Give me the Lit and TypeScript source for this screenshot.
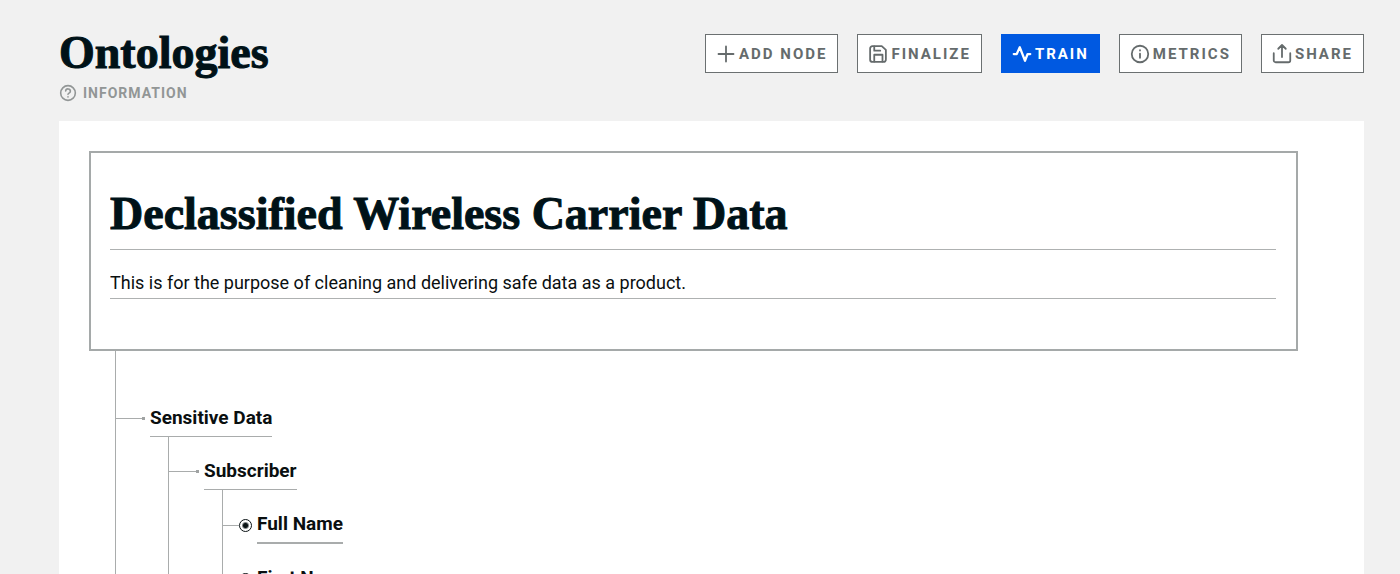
import { LitElement, html, css, svg, nothing, TemplateResult } from "lit";
import { customElement, property } from "lit/decorators.js";

type IconName = "plus" | "save" | "activity" | "info" | "share" | "help";

const ICONS: Record<IconName, TemplateResult> = {
  plus: svg`<path d="M12 2v20M2 12h20" />`,
  save: svg`<path d="M19 22.500H4.500a3 3 0 0 1-3-3v-15a3 3 0 0 1 3-3H17l5.500 5v12.500a3 3 0 0 1-3.500 3.500z" /><path d="M18 22v-9H7v9M7 2v5.500h8" />`,
  activity: svg`<path stroke-width="3" d="M23 12h-3.500l-3.500 9L9 3l-4 9H1" />`,
  info: svg`<circle cx="12" cy="12" r="11" /><path d="M12 17v-5.500M12 7v.3" />`,
  share: svg`<path d="M1 11v9.500A2.500 2.500 0 0 0 3.500 23h17a2.500 2.500 0 0 0 2.500-2.500V11M17 5l-5-5-5 5M12 0v16" />`,
  help: svg`<circle cx="12" cy="12" r="11" /><path d="M8.500 9a3.500 3.500 0 0 1 7 .8c0 2.200-3.500 2.600-3.500 4.200M12 17.800v.3" />`,
};

interface TreeNode {
  name: string;
  children?: TreeNode[];
}

const TREE: TreeNode[] = [
  {
    name: "Sensitive Data",
    children: [
      {
        name: "Subscriber",
        children: [{ name: "Full Name" }, { name: "First Name" }],
      },
    ],
  },
];

const ACTIONS: { icon: IconName; label: string; primary?: boolean }[] = [
  { icon: "plus", label: "ADD NODE" },
  { icon: "save", label: "FINALIZE" },
  { icon: "activity", label: "TRAIN", primary: true },
  { icon: "info", label: "METRICS" },
  { icon: "share", label: "SHARE" },
];

@customElement("ui-icon")
export class UiIcon extends LitElement {
  @property() name: IconName = "plus";

  static styles = css`
    :host {
      display: block;
      flex: none;
      width: 18px;
      height: 18px;
    }
    .glyph {
      display: block;
      width: 100%;
      height: 100%;
      fill: none;
      stroke: currentColor;
      stroke-width: 2.4;
      stroke-linecap: round;
      stroke-linejoin: round;
      overflow: visible;
    }
  `;

  render() {
    return html`<svg class="glyph" viewBox="0 0 24 24" aria-hidden="true">${ICONS[this.name]}</svg>`;
  }
}

@customElement("ontology-tree")
export class OntologyTree extends LitElement {
  @property({ attribute: false }) nodes: TreeNode[] = [];

  static styles = css`
    :host {
      display: block;
    }
    .list {
      list-style: none;
      margin: 0 0 0 18px;
      padding: 0;
      border-left: 1px solid #a9acac;
    }
    .root {
      margin-left: 26px;
      padding-top: 33px;
    }
    .row {
      display: flex;
      align-items: stretch;
      padding-top: 16px;
    }
    .branch {
      display: flex;
      align-items: center;
      width: 30px;
      margin-right: 5px;
    }
    .line {
      flex: 1;
      height: 1px;
      background: #a9acac;
    }
    .end {
      width: 3px;
      height: 3px;
      background: #a0a3a3;
    }
    .root > .item > .row > .branch {
      width: 29px;
    }
    .leaf .branch {
      width: 16px;
      margin-right: 0;
    }
    .name {
      line-height: 36px;
      border-bottom: 1px solid #a9acac;
      white-space: nowrap;
    }
    .leaf .name {
      border-bottom-width: 2px;
    }
    .body {
      padding-left: 35px;
    }
    .root > .item > .body {
      padding-left: 34px;
    }
    .mark {
      appearance: none;
      box-sizing: border-box;
      align-self: center;
      width: 13px;
      height: 13px;
      margin: 0 5px 0 0;
      border: 1px solid #0a1214;
      border-radius: 50%;
      background: radial-gradient(circle, #0a1214 2px, transparent 4px);
    }
  `;

  private renderNode(node: TreeNode): TemplateResult {
    const leaf = !node.children;
    const id = node.name.toLowerCase().replace(" ", "-");
    return html`<li class="item">
      <div class="row ${leaf ? "leaf" : ""}">
        <span class="branch">
          <span class="line"></span>${leaf ? nothing : html`<span class="end"></span>`}
        </span>
        ${leaf
          ? html`<input class="mark" type="radio" id=${id} name=${id} checked />
              <label class="name" for=${id}>${node.name}</label>`
          : html`<span class="name">${node.name}</span>`}
      </div>
      ${node.children
        ? html`<div class="body"><ul class="list">${node.children.map((c) => this.renderNode(c))}</ul></div>`
        : nothing}
    </li>`;
  }

  render() {
    return html`<ul class="list root">${this.nodes.map((n) => this.renderNode(n))}</ul>`;
  }
}

@customElement("app-root")
export class AppRoot extends LitElement {
  static styles = css`
    :host {
      display: flex;
      flex-direction: column;
      box-sizing: border-box;
      height: 100vh;
      padding: 34px 36px 0 59px;
      overflow: hidden;
      background: #f1f1f1;
      color: #0a0f10;
      font-family: Roboto, "Open Sans", sans-serif;
    }
    .top {
      display: flex;
      justify-content: space-between;
      align-items: flex-start;
      flex: none;
      height: 87px;
    }
    .heading,
    .title {
      margin: 0;
      color: #001218;
      font: bold 46px/48px "Liberation Serif", serif;
      -webkit-text-stroke: 1px currentColor;
    }
    .heading {
      line-height: 38px;
    }
    .info {
      display: flex;
      align-items: center;
      gap: 7px;
      margin-top: 13px;
      padding: 0 1px;
      color: #929696;
      font-size: 14px;
      line-height: 16px;
      font-weight: 700;
      letter-spacing: 1px;
      text-decoration: none;
    }
    .info-icon {
      width: 16px;
      height: 16px;
    }
    .actions {
      display: flex;
      gap: 19px;
    }
    .action {
      display: flex;
      align-items: center;
      gap: 4px;
      height: 39px;
      box-sizing: border-box;
      padding: 0 10px 0 11px;
      border: 1px solid #6b7071;
      background: #fff;
      color: #656b6c;
      font: bold 15px/20px Roboto, sans-serif;
      letter-spacing: 2px;
      white-space: nowrap;
    }
    .primary {
      border-color: #0059e1;
      background: #0059e1;
      color: #fff;
    }
    .panel {
      flex: 1;
      min-height: 0;
      padding: 30px 66px 0 30px;
      background: #fff;
      overflow: hidden;
    }
    .card {
      display: flex;
      flex-direction: column;
      padding: 36px 20px 50px 19px;
      border: 2px solid #a5a9a9;
    }
    .title,
    .purpose {
      box-sizing: border-box;
      width: 100%;
      padding: 0;
      border: 0;
      border-bottom: 1px solid #aeb1b1;
      border-radius: 0;
      background: none;
      outline: none;
    }
    .title {
      height: 61px;
      padding-bottom: 12px;
    }
    .purpose {
      height: 49px;
      padding-top: 16px;
      color: inherit;
      font: 18px/32px Roboto, sans-serif;
    }
    .tree {
      font-size: 19px;
      font-weight: 700;
    }
  `;

  render() {
    return html`
      <header class="top">
        <div>
          <h1 class="heading">Ontologies</h1>
          <a class="info" href="#information">
            <ui-icon class="info-icon" name="help"></ui-icon>INFORMATION
          </a>
        </div>
        <nav class="actions" aria-label="Ontology actions">
          ${ACTIONS.map(
            (a) => html`<button type="button" class="action ${a.primary ? "primary" : ""}">
              <ui-icon name=${a.icon}></ui-icon>${a.label}
            </button>`
          )}
        </nav>
      </header>
      <main class="panel">
        <form class="card">
          <input class="title" type="text" aria-label="Title" value="Declassified Wireless Carrier Data" />
          <input
            class="purpose"
            type="text"
            aria-label="Purpose"
            value="This is for the purpose of cleaning and delivering safe data as a product."
          />
        </form>
        <ontology-tree class="tree" .nodes=${TREE}></ontology-tree>
      </main>
    `;
  }
}
